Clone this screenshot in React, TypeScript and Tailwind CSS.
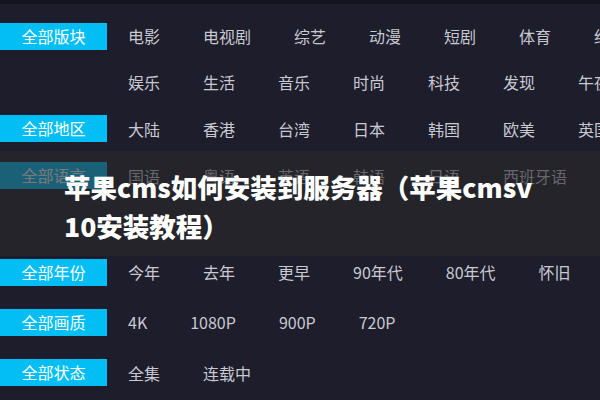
const groups = [
  {
    label: "全部版块",
    lines: [
      ["电影", "电视剧", "综艺", "动漫", "短剧", "体育", "纪录片"],
      ["娱乐", "生活", "音乐", "时尚", "科技", "发现", "午夜"],
    ],
  },
  { label: "全部地区", lines: [["大陆", "香港", "台湾", "日本", "韩国", "欧美", "英国"]] },
  { label: "全部语言", lines: [["国语", "粤语", "英语", "韩语", "日语", "西班牙语"], []] },
  { label: "全部年份", lines: [["今年", "去年", "更早", "90年代", "80年代", "怀旧"]] },
  { label: "全部画质", lines: [["4K", "1080P", "900P", "720P"]] },
  { label: "全部状态", lines: [["全集", "连载中"]] },
];

// line heights picked to match the row spacing in the screenshot
const heights = ["h-[46px]", "h-[46px]", "h-[47px]", "h-[47px]", "h-[48px]", "h-[50px]", "h-[50px]", "h-[51px]"];

export default function App() {
  let n = 0;
  return (
    <div
      className="relative w-[600px] h-[400px] overflow-hidden bg-[#1d1d2b] border-t-[4px] border-[#14141d]"
      style={{ fontFamily: '"Noto Sans CJK SC", "Noto Sans", sans-serif' }}
    >
      {/* Filter rows */}
      <div className="flex flex-col pt-[9px]">
        {groups.map((g) =>
          g.lines.map((items, i) => {
            const h = heights[n++];
            return (
              <div key={g.label + i} className={`flex items-center ${h}`}>
                <div className="w-[107px] shrink-0">
                  {i === 0 && (
                    <div className="h-[27px] bg-[#03bef4] text-white text-[16px] leading-[27px] text-center">
                      {g.label}
                    </div>
                  )}
                </div>
                <div className="ml-[21px] flex gap-[43px] whitespace-nowrap text-[16px] text-[#c9c9d2]">
                  {items.map((t) => (
                    <span key={t}>{t}</span>
                  ))}
                </div>
              </div>
            );
          })
        )}
      </div>

      {/* Title overlay */}
      <div className="absolute inset-x-0 top-[147px] h-[105px] bg-[rgba(40,40,42,0.62)] flex items-center pl-[64px] pt-[4px]">
        <h1 className="text-white text-[26.5px] font-black leading-[39px] whitespace-nowrap">
          苹果cms如何安装到服务器（苹果cmsv
          <br />
          10安装教程）
        </h1>
      </div>
    </div>
  );
}
